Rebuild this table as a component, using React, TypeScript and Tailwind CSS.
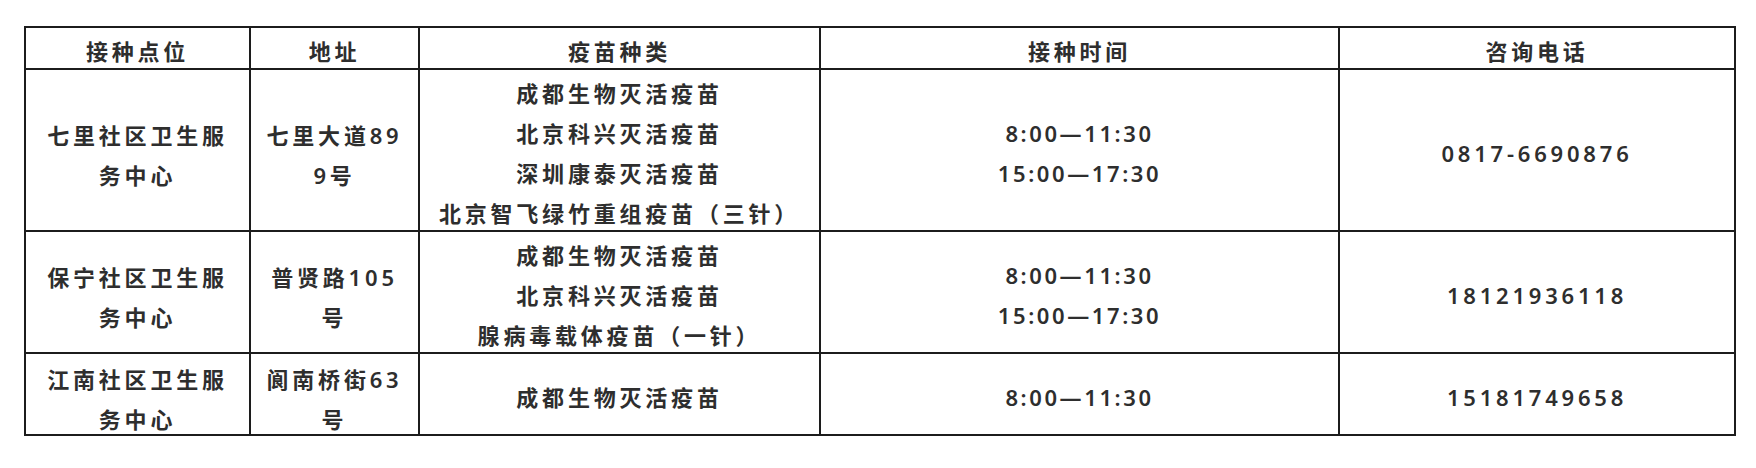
import React from 'react';

type Row = {
  site: string[];
  address: string[];
  vaccines: string[];
  hours: string[];
  phone: string;
};

const rows: Row[] = [
  {
    site: ['七里社区卫生服', '务中心'],
    address: ['七里大道89', '9号'],
    vaccines: ['成都生物灭活疫苗', '北京科兴灭活疫苗', '深圳康泰灭活疫苗', '北京智飞绿竹重组疫苗（三针）'],
    hours: ['8:00—11:30', '15:00—17:30'],
    phone: '0817-6690876',
  },
  {
    site: ['保宁社区卫生服', '务中心'],
    address: ['普贤路105', '号'],
    vaccines: ['成都生物灭活疫苗', '北京科兴灭活疫苗', '腺病毒载体疫苗（一针）'],
    hours: ['8:00—11:30', '15:00—17:30'],
    phone: '18121936118',
  },
  {
    site: ['江南社区卫生服', '务中心'],
    address: ['阆南桥街63', '号'],
    vaccines: ['成都生物灭活疫苗'],
    hours: ['8:00—11:30'],
    phone: '15181749658',
  },
];

const headers = ['接种点位', '地址', '疫苗种类', '接种时间', '咨询电话'];

// nudge keeps row height at n * 40px while dropping the glyphs a little
const Lines = ({ items, low }: { items: string[]; low?: boolean }) => (
  <div className={low ? 'translate-y-[5px]' : 'translate-y-[3px]'}>
    {items.map((t, i) => (
      <div key={i} className="whitespace-nowrap">{t}</div>
    ))}
  </div>
);

export default function App() {
  const cell = 'border-2 border-[#1c1c1c] p-0 text-center align-middle';
  return (
    <div className="min-h-[468px] w-[1756px] bg-white pl-[24px] pt-[26px] text-[#2e2e2e] [font-family:'Noto_Sans','Noto_Sans_CJK_SC',sans-serif]">
      <table className="w-[1710px] table-fixed border-collapse text-[22px] leading-[40px] tracking-[3.8px]">
        <colgroup>
          <col className="w-[225px]" />
          <col className="w-[169px]" />
          <col className="w-[401px]" />
          <col className="w-[519px]" />
          <col className="w-[396px]" />
        </colgroup>
        <thead>
          <tr>
            {headers.map((h) => (
              <th key={h} className={`${cell} font-bold`}>
                <Lines items={[h]} />
              </th>
            ))}
          </tr>
        </thead>
        <tbody>
          {rows.map((r) => (
            <tr key={r.phone} className="font-semibold">
              <td className={cell}><Lines items={r.site} low /></td>
              <td className={cell}><Lines items={r.address} low /></td>
              <td className={cell}><Lines items={r.vaccines} /></td>
              <td className={`${cell} tracking-[2.6px]`}><Lines items={r.hours} /></td>
              <td className={cell}><Lines items={[r.phone]} /></td>
            </tr>
          ))}
        </tbody>
      </table>
    </div>
  );
}
